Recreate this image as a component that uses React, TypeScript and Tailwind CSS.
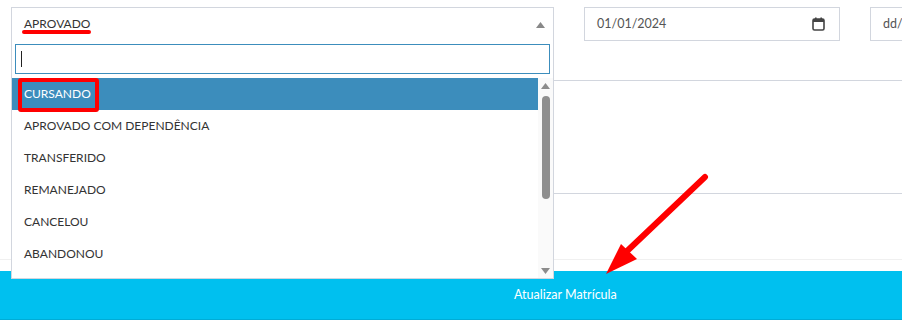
import { useState } from 'react'

const OPTIONS = ['APROVADO COM DEPENDÊNCIA', 'TRANSFERIDO', 'REMANEJADO', 'CANCELOU', 'ABANDONOU']

function CalendarIcon() {
  return (
    <svg width="13" height="14" viewBox="0 0 13 14" className="text-[#444]">
      <rect x="1" y="2" width="11" height="11" rx="1.5" fill="none" stroke="currentColor" strokeWidth="1.6" />
      <rect x="1" y="2" width="11" height="3" fill="currentColor" />
      <rect x="3" y="0.5" width="1.6" height="2.5" fill="currentColor" />
      <rect x="8.4" y="0.5" width="1.6" height="2.5" fill="currentColor" />
    </svg>
  )
}

export default function App() {
  const [query, setQuery] = useState('')

  return (
    <div className="relative w-[902px] h-[326px] bg-white overflow-hidden text-[12px] text-[#333]" style={{ fontFamily: 'Lato, "Noto Sans", sans-serif' }}>
      {/* Filters row */}
      <div className="flex items-start pt-[7px] pl-[11px] h-[41px]">
        <div className="relative shrink-0 w-[543px] h-[34px] border border-[#d2d6de] flex items-center pl-[12px]">
          <span>APROVADO</span>
          <svg width="9" height="6" viewBox="0 0 9 6" className="absolute right-[8px] top-[14px]">
            <path d="M0 6 L4.5 0 L9 6 Z" fill="#888" />
          </svg>
        </div>
        <div className="ml-[30px] shrink-0 w-[256px] h-[34px] border border-[#d2d6de] flex items-center justify-between pl-[12px] pr-[14px] text-[#555] text-[12.5px]">
          <span>01/01/2024</span>
          <CalendarIcon />
        </div>
        <div className="ml-[30px] w-[120px] shrink-0 h-[34px] border border-[#d2d6de] flex items-center pl-[12px] text-[#555] text-[12.5px]">
          <span>dd/</span>
        </div>
      </div>

      {/* Table area behind the dropdown */}
      <div className="grid grid-cols-[554px_1fr]">
        <div />
        <div>
          <div className="h-[40px] border-b border-[#d2d6de]" />
          <div className="h-[113px] border-b border-[#d2d6de]" />
        </div>
      </div>
      <div className="h-[66px] border-b border-[#f0f0f0]" />
      <div className="h-[11px]" />

      {/* Submit bar */}
      <div className="h-[49px] bg-[#00c0ef] border-b border-[#00acd6] flex items-center pl-[514px] text-white text-[12.5px]">
        Atualizar Matrícula
      </div>

      {/* Open dropdown */}
      <div className="absolute left-[11px] top-[40px] w-[543px] h-[239px] bg-white border border-t-0 border-[#d2d6de] flex flex-col">
        <div className="relative px-[3px] pt-[4px] pb-[4px]">
          <input
            value={query}
            onChange={e => setQuery(e.target.value)}
            className="w-full h-[30px] border border-[#3c8dbc] outline-none px-[5px]"
          />
          {/* text caret */}
          <div className="absolute left-[9px] top-[11px] w-[1px] h-[16px] bg-[#222]" />
        </div>
        <div className="flex flex-1 min-h-0 overflow-hidden">
          <div className="flex-1 flex flex-col">
            <div className="h-[32px] shrink-0 bg-[#3c8dbc] text-white flex items-center pl-[12px]">CURSANDO</div>
            {OPTIONS.map(o => (
              <div key={o} className="h-[32px] shrink-0 flex items-center pl-[12px]">{o}</div>
            ))}
          </div>
          <div className="w-[15px] bg-[#fafafa] flex flex-col items-center">
            <svg width="9" height="6" viewBox="0 0 9 6" className="mt-[5px]">
              <path d="M0 6 L4.5 0 L9 6 Z" fill="#8c8c8c" />
            </svg>
            <div className="w-[8px] h-[103px] mt-[7px] rounded-full bg-[#8f8f8f]" />
            <div className="flex-1" />
            <svg width="9" height="6" viewBox="0 0 9 6" className="mb-[4px]">
              <path d="M0 0 L4.5 6 L9 0 Z" fill="#8c8c8c" />
            </svg>
          </div>
        </div>
      </div>

      {/* Annotations */}
      <div className="absolute left-[22px] top-[30px] w-[69px] h-[4px] rounded-full bg-[#ff0000]" />
      <div className="absolute left-[18px] top-[78px] w-[81px] h-[34px] rounded-[3px] border-[4px] border-[#ff0000]" />
      <svg className="absolute left-0 top-0 pointer-events-none" width="902" height="326">
        <line x1="705" y1="177" x2="625" y2="253" stroke="#ff0000" strokeWidth="6" strokeLinecap="round" />
        <path d="M606 274 L621 244 L637 259 Z" fill="#ff0000" />
      </svg>
    </div>
  )
}
